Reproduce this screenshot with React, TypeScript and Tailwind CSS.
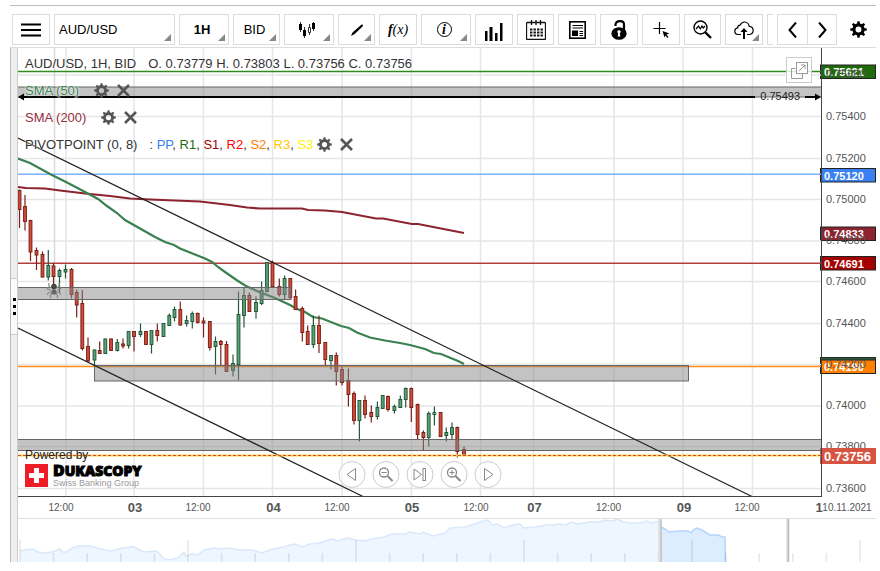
import type { ReactNode } from "react"

type Point = [number, number]
// x, high, low, body top, body bottom, rising
type Candle = [number, number, number, number, number, 0 | 1]

const candles: Candle[] = [
  [19.5, 189.5, 228, 190.5, 209.5, 0],
  [25, 195, 230.5, 206.5, 221.5, 0],
  [30.5, 219.7, 261, 220.5, 252, 0],
  [36.5, 247.5, 270, 250.5, 255, 0],
  [42.5, 251.5, 277.5, 254.5, 277, 0],
  [48.3, 250, 280.5, 265.5, 277, 1],
  [53.5, 263, 290, 266, 276.5, 0],
  [59.5, 268.5, 293, 270.5, 276.5, 1],
  [65.5, 264.5, 278.5, 269.5, 272, 1],
  [71.5, 268, 298.5, 269.5, 294.5, 0],
  [76.7, 289.5, 317.5, 292.5, 305, 0],
  [82.3, 290, 350.5, 303.5, 348.5, 0],
  [88, 337.5, 362, 346.5, 361, 0],
  [94.5, 349.5, 366, 350, 360, 1],
  [99.7, 341.5, 353.5, 350.5, 353.5, 0],
  [105.3, 338.5, 353.5, 339, 353.5, 1],
  [111, 338.5, 350.5, 339, 350.5, 0],
  [117.3, 339, 351.5, 342.5, 350.5, 1],
  [123, 338.5, 348.5, 344, 346, 0],
  [128.6, 331, 348.5, 331.5, 345.5, 1],
  [134, 331, 351.5, 331.5, 336.5, 0],
  [140.5, 323.5, 337, 331.5, 334.5, 1],
  [146, 331.5, 344.5, 331.5, 344.5, 0],
  [151.5, 330, 353.5, 330.5, 344.5, 1],
  [157.3, 323.5, 341.5, 330.5, 335.5, 0],
  [163.5, 323.5, 336.5, 323.5, 336.5, 1],
  [169.3, 313.5, 326, 315.5, 325.5, 1],
  [174.5, 306.5, 321.5, 309.5, 317.5, 1],
  [180.3, 301.5, 325.5, 309.5, 325, 0],
  [186.6, 315.5, 326.5, 320.5, 323.5, 1],
  [192.3, 311.5, 328.5, 313.5, 321.5, 1],
  [197.7, 312.5, 323.5, 313.5, 322.5, 0],
  [203.5, 317.5, 337.5, 321, 323, 0],
  [209.8, 321.5, 350.5, 321.5, 347.5, 0],
  [215.5, 336.5, 374.5, 341.5, 346.5, 1],
  [220.8, 340, 365, 341.5, 344.5, 0],
  [226.5, 341, 371.5, 344.5, 371.5, 0],
  [233, 354.5, 376.5, 363.5, 370.5, 1],
  [238.5, 291.5, 380, 314.5, 364.5, 1],
  [244, 287.5, 327.5, 295.5, 315.5, 1],
  [249.4, 292.5, 311.5, 295.5, 311.5, 0],
  [256, 296.5, 318.5, 302.5, 311.5, 1],
  [261.6, 281.5, 305, 290.5, 303.5, 1],
  [267, 262.5, 292.5, 262.5, 291.5, 1],
  [272.5, 260.5, 287, 262.5, 286.5, 0],
  [279.3, 278.5, 296.5, 286.5, 294.5, 0],
  [284.6, 275.5, 299.5, 278.5, 294.5, 1],
  [290.3, 278.5, 299.5, 278.5, 297.5, 0],
  [295.6, 289.5, 309.5, 296.5, 309.5, 0],
  [302.3, 306.5, 341.5, 308.5, 332.5, 0],
  [307.7, 325.5, 345, 331.5, 344.5, 0],
  [313.4, 315.5, 348, 325.5, 344.5, 1],
  [319, 315.5, 353, 325.5, 343.5, 0],
  [325.3, 342, 365.5, 342.5, 359.5, 0],
  [331, 355, 369.5, 355.5, 360.5, 1],
  [336.3, 352.5, 385.5, 355.5, 371.5, 0],
  [342, 366.5, 385.5, 369.5, 382.5, 0],
  [348.4, 368.5, 406.5, 380.5, 394.5, 0],
  [354, 391.5, 424.5, 393.5, 420.5, 0],
  [359.4, 400.5, 441.5, 400.5, 420.5, 1],
  [365, 395.5, 418.5, 400.5, 414.5, 0],
  [371.3, 405.5, 422.5, 412.5, 416.5, 0],
  [377.4, 401.5, 419.5, 407.5, 416.5, 1],
  [382.7, 395.5, 408.5, 395.5, 408.5, 1],
  [388, 395.5, 411.5, 396.5, 409.5, 0],
  [394.4, 404.5, 413.5, 406.5, 410.5, 1],
  [400.3, 395.5, 407.5, 399.5, 407.5, 1],
  [405.7, 387.5, 407.5, 388.5, 399.5, 1],
  [411.3, 387.5, 422, 388.5, 407.5, 0],
  [417.6, 403.5, 439.5, 404.5, 434.5, 0],
  [423.4, 430.5, 450.5, 432.5, 437.5, 0],
  [428.7, 411.5, 446.5, 413.5, 437.5, 1],
  [434.4, 406.5, 425.5, 412.5, 414.5, 1],
  [440.6, 412.5, 436.5, 412.5, 436.5, 0],
  [446.3, 427.5, 441.5, 432.5, 435.5, 1],
  [452, 422.5, 439.5, 427.5, 434.5, 1],
  [457.3, 426.5, 457.5, 427.5, 451.5, 0],
  [464, 446.5, 455.5, 449.5, 455.5, 0],
]

const sma50: Point[] = [
  [18, 158.5], [30, 163], [50, 174], [66, 182], [87, 193], [98, 199], [107, 206], [117, 213],
  [125, 220], [140, 228.5], [155, 237], [165, 242], [174, 245], [180, 248.5], [205, 258.5],
  [212, 262], [218, 267], [225, 272], [238, 281], [246, 286], [258, 291.5], [275, 298], [290, 305],
  [297, 309], [305, 312], [313, 317], [322, 318.5], [341, 326], [349, 328], [357, 332.5],
  [370, 337.5], [385, 340.5], [400, 343], [410, 345], [425, 349], [434, 353], [441, 354],
  [458, 361], [464, 364],
]

const sma200: Point[] = [
  [18, 187], [26, 188], [45, 188.5], [60, 190.5], [85, 193.5], [110, 196], [130, 198.5], [150, 199.5],
  [175, 200.5], [200, 201.5], [230, 205], [247, 207.5], [260, 208.5], [302, 208.5], [308, 210],
  [325, 210.5], [342, 212], [376, 218.5], [383, 218.5], [412, 224], [418, 224], [464, 233],
]

const history: Point[] = [
  [20, 551], [25, 550], [33, 549], [38, 552], [44, 553], [52, 552], [60, 549], [62, 552], [67, 552],
  [72, 548], [78, 546], [90, 546], [97, 548], [105, 550], [112, 551], [120, 548.5], [133, 546.5],
  [138, 549], [144, 552], [156, 551], [160, 554], [163, 558], [168, 560], [178, 558], [184, 552],
  [186, 556], [192, 554], [198, 555], [204, 550], [214, 548], [220, 549], [228, 548], [240, 550],
  [252, 550], [262, 553], [270, 550], [283, 547], [290, 545], [296, 544], [302, 547], [310, 544],
  [320, 543], [325, 541], [332, 539], [338, 541], [344, 539], [349, 538], [356, 540], [364, 541],
  [372, 539], [384, 537], [392, 534], [405, 534], [410, 532], [420, 534], [423, 532], [433, 536],
  [445, 533], [450, 528], [465, 527], [475, 524], [480, 522], [488, 520], [492, 525], [498, 524],
  [504, 528], [513, 525], [520, 524], [524, 528], [536, 527], [545, 525], [553, 525], [560, 524],
  [566, 525], [571, 522], [577, 524], [590, 522], [600, 522], [604, 520], [612, 521], [618, 519],
  [623, 522], [632, 523], [640, 523], [647, 521], [652, 523], [660, 521],
]

const selected: Point[] = [
  [661, 527], [665, 529], [669, 532], [680, 531], [688, 531], [691, 533], [693, 530], [697, 528],
  [702, 530], [710, 535], [718, 535], [722, 537], [725, 537],
]

const gridX: number[] = [66, 134, 203.5, 272.5, 342, 411.5, 480.5, 533.5, 614, 683, 752.5]
const gridY: number[] = [75, 116.5, 158.5, 199.5, 241, 281.5, 323.5, 364.5, 406, 446.5, 488.5]
const prices = ["0.75600", "0.75400", "0.75200", "0.75000", "0.74800", "0.74600", "0.74400", "0.74200", "0.74000", "0.73800", "0.73600"]

const times: [number, string, boolean][] = [
  [61, "12:00", false],
  [135, "03", true],
  [198, "12:00", false],
  [273.5, "04", true],
  [337, "12:00", false],
  [412, "05", true],
  [476, "12:00", false],
  [534.5, "07", true],
  [608.5, "12:00", false],
  [684, "09", true],
  [747, "12:00", false],
]

const tags = [
  { y: 65, color: "#1f6b0c", label: "0.75621" },
  { y: 168.5, color: "#3a80f0", label: "0.75120" },
  { y: 227, color: "#8c2430", label: "0.74833" },
  { y: 256.5, color: "#a50000", label: "0.74691" },
  { y: 357.5, color: "#2c5f3c", label: "" },
  { y: 360, color: "#ff8000", label: "0.74190" },
]

const toPath = (pts: Point[]) => pts.map((p) => p.join(",")).join(" ")

const teeth = [0, 45, 90, 135, 180, 225, 270, 315]

const Gear = ({ size, color }: { size: number; color: string }) => (
  <svg width={size} height={size} viewBox="0 0 16 16" fill={color}>
    <circle cx="8" cy="8" r="4.3" fill="none" stroke={color} strokeWidth="3" />
    {teeth.map((t) => (
      <path key={t} d="M6.5 3.2 L7 0.2 H9 L9.5 3.2 Z" transform={`rotate(${t} 8 8)`} />
    ))}
  </svg>
)

const Cross = () => (
  <svg width="13" height="13" viewBox="0 0 13 13" stroke="#555" strokeWidth="2.6">
    <path d="M1 1 L12 12 M12 1 L1 12" />
  </svg>
)

const Corner = () => (
  <span className="pointer-events-none absolute bottom-[3px] right-[3px] border-b-[7px] border-l-[7px] border-b-[#888] border-l-transparent" />
)

const Tool = ({ label, width, menu, children }: { label: string; width: string; menu?: boolean; children: ReactNode }) => (
  <button aria-label={label} className={`relative flex h-[31px] shrink-0 items-center justify-center border border-[#dcdcdc] bg-white ${width}`}>
    {children}
    {menu && <Corner />}
  </button>
)

const Pick = ({ label, width, text, value }: { label: string; width: string; text: string; value: string }) => (
  <div className={`relative h-[31px] shrink-0 border border-[#dcdcdc] bg-white ${width}`}>
    <select aria-label={label} className={`h-full w-full appearance-none bg-transparent text-[13px] text-black outline-none ${text}`}>
      <option>{value}</option>
    </select>
    <Corner />
  </div>
)

const Toolbar = () => (
  <div className="flex items-center gap-1 border-b border-t border-b-[#dcdcdc] border-t-[#bdbdbd] pb-[2px] pl-[2px] pt-2">
    <Tool label="Menu" width="w-[38px]">
      <svg width="20" height="14" stroke="#000" strokeWidth="2">
        <path d="M0 1.5 H20 M0 7 H20 M0 12.5 H20" />
      </svg>
    </Tool>
    <Pick label="Instrument" width="w-[121px]" text="pl-1" value="AUD/USD" />
    <Pick label="Period" width="w-[50px]" text="pr-1 text-center font-bold" value="1H" />
    <Pick label="Offer side" width="w-[47px]" text="pr-1 text-center" value="BID" />
    <Tool label="Chart type" width="w-[50px]" menu>
      <svg width="18" height="16" viewBox="0 0 18 16" className="mr-1">
        <path d="M2.5 0 V10 M6.5 5 V16 M11.5 2 V13 M15.5 0 V9" stroke="#333" />
        <path d="M1 2 h3 v6 h-3z M5 8 h3 v6 h-3z M14 1 h3 v6 h-3z" fill="#000" />
        <path d="M10.5 5.5 h2 v5 h-2z" fill="#fff" stroke="#333" />
      </svg>
    </Tool>
    <Tool label="Draw" width="w-[37px]" menu>
      <svg width="14" height="14" viewBox="0 0 14 14" className="mt-px">
        <path d="M1 13 L2.5 9.5 L10.5 2.5 Q12 1 12.8 1.8 Q13.4 2.6 12.3 3.8 L4.7 11 Z" fill="#000" />
      </svg>
    </Tool>
    <Tool label="Indicators" width="w-[38px]">
      <span className="font-['Liberation_Serif'] text-sm italic leading-none"><b>f</b>(x)</span>
    </Tool>
    <Tool label="Info" width="w-[50px]" menu>
      <span className="mr-1 flex size-[15px] items-center justify-center rounded-full border border-black font-['Liberation_Serif'] text-sm font-bold italic leading-none">i</span>
    </Tool>
    <Tool label="Volumes" width="w-[38px]">
      <svg width="18" height="18" fill="#000" className="mt-1">
        <path d="M0 8h2.5v10H0z M4.5 4h3v14h-3z M10 10h2.5v8h-2.5z M15 0h2.5v18h-2.5z" />
      </svg>
    </Tool>
    <Tool label="Calendar" width="w-[37px]">
      <svg width="20" height="20" viewBox="0 0 20 20" fill="none" stroke="#111">
        <rect x="0.5" y="2.5" width="19" height="17" rx="1" strokeWidth="1.3" />
        <path d="M5.5 0 V5 M10 0 V5 M14.5 0 V5" strokeWidth="1.3" />
        <path d="M4 9.5 H17 M4 12.5 H17 M4 15.5 H17" strokeWidth="2" strokeDasharray="2.4 1.1" />
      </svg>
    </Tool>
    <Tool label="News" width="w-[38px]">
      <svg width="17" height="18" viewBox="0 0 17 18" fill="none" stroke="#000">
        <rect x="0.8" y="0.8" width="15.4" height="16.4" strokeWidth="1.6" />
        <path d="M3.5 4.5 H14 M3.5 7 H14 M10.5 10.5 H14 M10.5 12.5 H14 M10.5 14.5 H14" strokeWidth="1.2" />
        <path d="M3 9.5 h6 v5.5 h-6z" fill="#000" stroke="none" />
      </svg>
    </Tool>
    <Tool label="Unlock" width="w-[38px]">
      <svg width="17" height="20" viewBox="0 0 17 20">
        <path d="M4.5 6 V4.5 Q5 1.2 9 1.2 Q13 1.2 13 4.5 V10" fill="none" stroke="#000" strokeWidth="2.2" />
        <ellipse cx="8" cy="13.5" rx="7.6" ry="6.3" fill="#000" />
        <path d="M8 10.2 a1.6 1.6 0 0 1 0.9 3 L9.3 16.5 H6.7 L7.1 13.2 A1.6 1.6 0 0 1 8 10.2z" fill="#fff" />
      </svg>
    </Tool>
    <Tool label="Crosshair" width="w-[38px]">
      <svg width="17" height="16" viewBox="0 0 17 16">
        <path d="M6.5 0 V12 M0.5 6.5 H12.5" stroke="#000" strokeWidth="1.2" />
        <path d="M9.5 9 L16.5 11.5 L13.5 12.5 L15.5 15 L14.5 16 L12.5 13.5 L11.5 15.5 Z" fill="#000" />
      </svg>
    </Tool>
    <Tool label="Zoom to pattern" width="w-[37px]">
      <svg width="19" height="19" viewBox="0 0 19 19" fill="none" stroke="#000">
        <circle cx="7.5" cy="7.5" r="6.5" strokeWidth="1.4" />
        <path d="M3 9 L5.5 6 L7.3 8.8 L9 6 L10.2 8 L12 6" strokeWidth="1.2" />
        <path d="M12.3 12.3 L18 18" strokeWidth="2.4" />
      </svg>
    </Tool>
    <Tool label="Save" width="w-[38px]" menu>
      <svg width="20" height="18" viewBox="0 0 20 18" fill="none" stroke="#000" className="mt-px">
        <path d="M7 13.5 H4 Q0.8 13.2 0.8 10 Q0.9 7.3 3.7 6.8 Q3.8 4.3 6 4.2 Q7.5 0.9 10.8 1 Q14.6 1.3 15.2 5.4 Q19 5.8 19.2 9.3 Q19 13.2 15.5 13.5 H13" strokeWidth="1.2" />
        <path d="M10 18 V9" strokeWidth="2" />
        <path d="M6.5 11 L10 7 L13.5 11 Z" fill="#000" stroke="none" />
      </svg>
    </Tool>
    <div className="h-[31px] w-[6px] border-y border-l border-[#dcdcdc]" />
    <div className="ml-auto flex h-[31px] border border-[#dcdcdc]">
      <button aria-label="Previous tools" className="flex w-[30px] items-center justify-center border-r border-[#dcdcdc]">
        <svg width="9" height="16" fill="none" stroke="#000" strokeWidth="2"><path d="M8 0.5 L1.5 8 L8 15.5" /></svg>
      </button>
      <button aria-label="Next tools" className="flex w-[28px] items-center justify-center">
        <svg width="9" height="16" fill="none" stroke="#000" strokeWidth="2"><path d="M1 0.5 L7.5 8 L1 15.5" /></svg>
      </button>
    </div>
    <button aria-label="Settings" className="flex w-[35px] justify-center">
      <Gear size={17} color="#000" />
    </button>
  </div>
)

const LegendActions = ({ name }: { name: string }) => (
  <>
    <button aria-label={`${name} settings`}><Gear size={15} color="#555" /></button>
    <button aria-label={`Remove ${name}`} className="ml-2"><Cross /></button>
  </>
)

const Legend = () => (
  <div className="absolute left-[7px] top-[2px] text-[13px] text-[#333] [text-shadow:0_0_2px_#fff,0_0_2px_#fff]">
    <div className="flex h-[27px] items-center gap-3">
      <span>AUD/USD, 1H, BID</span>
      <span>O. 0.73779 H. 0.73803 L. 0.73756 C. 0.73756</span>
    </div>
    <div className="flex h-[27px] items-center">
      <span className="mr-[15px] text-[#3a8050]">SMA (50)</span>
      <LegendActions name="SMA 50" />
    </div>
    <div className="flex h-[27px] items-center">
      <span className="mr-[15px] text-[#962d3c]">SMA (200)</span>
      <LegendActions name="SMA 200" />
    </div>
    <div className="flex h-[27px] items-center">
      <span className="mr-3">PIVOTPOINT (0, 8)</span>
      <span className="mr-1">
        : <span className="text-[#3a80f0]">PP</span>, <span className="text-[#1f6b0c]">R1</span>, <span className="text-[#a50000]">S1</span>, <span className="text-[#f00]">R2</span>, <span className="text-[#ff8000]">S2</span>, <span className="text-[#ffc800]">R3</span>, <span className="text-[#fff000]">S3</span>
      </span>
      <LegendActions name="Pivot point" />
    </div>
  </div>
)

const Plot = () => (
  <svg className="block h-full w-full">
    <g transform="translate(-18 -48)">
      <g stroke="#e6e6e9" strokeWidth="1.5">
        {gridX.map((x) => <line key={x} x1={x} x2={x} y1="48" y2="496" />)}
        {gridY.map((y) => <line key={y} x1="18" x2="200%" y1={y} y2={y} />)}
        <line x1="54.5" x2="54.5" y1="48" y2="290" stroke="#d9d9d9" />
      </g>

      <line x1="18" x2="200%" y1="71.5" y2="71.5" stroke="#2f8a1c" strokeWidth="1.4" />
      <line x1="18" x2="200%" y1="174.3" y2="174.3" stroke="#7fb0fa" strokeWidth="1.6" />
      <line x1="18" x2="200%" y1="263.3" y2="263.3" stroke="#b33c3c" strokeWidth="1.4" />
      <line x1="18" x2="200%" y1="366.5" y2="366.5" stroke="#ff8a14" strokeWidth="1.4" />

      <polyline points={toPath(sma200)} fill="none" stroke="#8c2430" strokeWidth="2.2" />
      <polyline points={toPath(sma50)} fill="none" stroke="#3a8050" strokeWidth="2.2" />

      {candles.map(([x, high, low, top, bottom, up]) => (
        <g key={x} stroke={up ? "#25563a" : "#7a2018"}>
          <line x1={x} x2={x} y1={high} y2={low} strokeWidth="1.2" />
          <rect x={x - 1.4} y={top} width="2.8" height={bottom - top} fill={up ? "#5aa578" : "#d64a38"} />
        </g>
      ))}

      <g fill="#888" fillOpacity="0.5" stroke="#666">
        <rect x="10" y="87" width="200%" height="10" />
        <rect x="10" y="287.5" width="281" height="12" />
        <rect x="94.5" y="365.5" width="594" height="15.5" />
        <rect x="10" y="439.5" width="200%" height="11" />
      </g>

      <path d="M18 138 L752 496.5 M18 328 L363 496.5" stroke="#222" strokeWidth="1.2" />

      <path d="M51.5 288 Q48 287 49 283 M56.5 288 Q60 287 59 283 M51 290 Q47 290 47 287 M57 290 Q61 290 61 287 M51.5 292 Q47.5 292 47.5 295 M56.5 292 Q60.5 292 60.5 295 M52 293.5 Q49.5 295 51 298 M56 293.5 Q58.5 295 57 298" fill="none" stroke="#888" strokeWidth="1.2" />
      <circle cx="54" cy="286.5" r="2.8" fill="#444" />
      <circle cx="54" cy="292" r="2.6" fill="#666" />

      <line x1="18" x2="200%" y1="455.5" y2="455.5" stroke="#ffd24a" strokeWidth="2" />
      <line x1="18" x2="200%" y1="455.5" y2="455.5" stroke="#cc4a38" strokeDasharray="3 2" />
    </g>
  </svg>
)

// The marker line stays attached to both sides of the plot
const PriceMarker = () => (
  <div className="absolute inset-x-0 top-[41px] flex h-4 items-center">
    <svg width="8" height="8" className="-mr-1 shrink-0"><path d="M0 4 L6 0.5 V7.5 Z" /></svg>
    <div className="h-[2px] flex-1 bg-black" />
    <span className="px-[5px] pb-[3px] text-[11px] leading-3 text-[#222]">0.75493</span>
    <div className="h-[2px] w-3 bg-black" />
    <svg width="8" height="8" className="-ml-1 shrink-0"><path d="M8 4 L2 0.5 V7.5 Z" /></svg>
  </div>
)

const Branding = () => (
  <div className="absolute bottom-[8px] left-[7px]">
    <div className="text-xs leading-3 text-[#222]">Powered by</div>
    <a href="#" className="mt-[2px] flex items-center gap-[5px]">
      <svg width="23" height="23">
        <rect width="23" height="23" fill="#ee1c25" />
        <path d="M9 4 h5 v5 h5 v5 h-5 v5 h-5 v-5 h-5 v-5 h5z" fill="#fff" />
      </svg>
      <span className="flex flex-col">
        <span className="font-['Open_Sans'] text-sm font-extrabold leading-[14px] text-black [-webkit-text-stroke:1px_#000]"><span className="text-base leading-[14px]">D</span>UKASCOPY</span>
        <span className="text-[9px] leading-[10px] text-[#999]">Swiss Banking Group</span>
      </span>
    </a>
  </div>
)

const Round = ({ label, children }: { label: string; children: ReactNode }) => (
  <button aria-label={label} className="flex size-[27px] items-center justify-center rounded-full border border-[#ccc] bg-white/60">
    <svg width="15" height="15" viewBox="0 0 15 15" fill="none" stroke="#888">{children}</svg>
  </button>
)

const Navigation = () => (
  <div className="absolute bottom-[8px] left-1/2 flex -translate-x-1/2 gap-[7px]">
    <Round label="Scroll left"><path d="M11 1.5 V13.5 L2.5 7.5 Z" /></Round>
    <Round label="Zoom out">
      <circle cx="5.5" cy="5.5" r="4.5" strokeWidth="1.3" />
      <path d="M3 5.5 H8" />
      <path d="M9 9 L14 14" strokeWidth="2" />
    </Round>
    <Round label="Go to last">
      <path d="M1.5 2 V13 L9 7.5 Z" />
      <rect x="10.5" y="1.5" width="2.5" height="12" />
    </Round>
    <Round label="Zoom in">
      <circle cx="5.5" cy="5.5" r="4.5" strokeWidth="1.3" />
      <path d="M3 5.5 H8 M5.5 3 V8" />
      <path d="M9 9 L14 14" strokeWidth="2" />
    </Round>
    <Round label="Scroll right"><path d="M4 1.5 V13.5 L12.5 7.5 Z" /></Round>
  </div>
)

const PriceAxis = () => (
  <svg className="block h-[448px] w-[54px] shrink-0 overflow-visible">
    <g transform="translate(-822 -48)" fontSize="11" fill="#555">
      {tags.map((t) => (
        <g key={t.y}>
          <rect x="820.5" y={t.y} width="55" height="13.5" fill={t.color} stroke="#222" />
          <text x="824" y={t.y + 11} fill="#fff" fontWeight="700">{t.label}</text>
        </g>
      ))}
      {prices.map((p, i) => <text key={p} x="826" y={gridY[i] + 3}>{p}</text>)}
      <rect x="820" y="448" width="56" height="16" fill="#d85442" />
      <text x="824" y="460.5" fill="#fff" fontWeight="700" fontSize="13">0.73756</text>
    </g>
  </svg>
)

const TimeAxis = () => (
  <svg className="block h-[21px] w-full">
    <g transform="translate(-18 -497)" fill="#555" textAnchor="middle">
      {times.map(([x, label, day]) => (
        <text key={x} x={x} y={day ? 512 : 511} fontSize={day ? 13 : 10} fontWeight={day ? 700 : 400}>{label}</text>
      ))}
      <text x="819" y="512" fontSize="13" fontWeight="700">1</text>
      <text x="847" y="511" fontSize="10">10.11.2021</text>
    </g>
  </svg>
)

const months = Array.from({ length: 26 }, (_, i) => 20 + i * 33.6)

const Navigator = () => (
  <svg className="block h-[44px] w-full border-t border-[#e0e0e0]">
    <g transform="translate(-18 -519)">
      <path d={`M20,563 L${toPath(history)} V563 Z`} fill="#eef6ff" />
      <polyline points={toPath(history)} fill="none" stroke="#dbe8fa" strokeWidth="1.5" />
      <path d={`M661,563 L${toPath(selected)} V563 Z`} fill="#dcedff" />
      <polyline points={`${toPath(selected)} 725.5,563`} fill="none" stroke="#b5d4fb" strokeWidth="1.5" />
      {months.map((x, i) => (
        <line key={x} x1={x} x2={x} y1={i % 5 ? 553 : 540} y2="563" stroke="#000" strokeOpacity="0.09" strokeWidth="1.6" />
      ))}
      <path d="M659 519 V563 M787 519 V563" stroke="#e2e2e2" strokeWidth="2" />
      <path d="M661 519 V563 M788.5 519 V563" stroke="#b8b8b8" strokeWidth="1.4" />
    </g>
  </svg>
)

const App = () => {
  return (
    <div className="min-h-screen bg-white pl-[10px] pr-1 pt-[5px] font-['Liberation_Sans',Arial,sans-serif]">
      <Toolbar />
      <div className="flex">
        <div className="flex w-2 shrink-0 flex-col border-l border-r border-l-[#bbb] border-r-[#ccc] bg-[#eee]">
          <button aria-label="Toggle side panel" className="mt-[230px] flex h-[57px] flex-col items-center justify-center gap-1 border-y border-[#ccc] bg-[#fafafa]">
            <span className="size-[3px] bg-black" />
            <span className="size-[3px] bg-black" />
            <span className="size-[3px] bg-black" />
          </button>
        </div>
        <div className="min-w-0 flex-1">
          <div className="flex">
            <div className="relative h-[449px] min-w-0 flex-1 border-b border-r border-[#444]">
              <Plot />
              <PriceMarker />
              <Legend />
              <button aria-label="Detach chart" className="absolute right-[9px] top-[9px] flex size-[26px] items-center justify-center border border-[#ccc] bg-white/80">
                <svg width="17" height="17" viewBox="0 0 17 17" fill="none" stroke="#999">
                  <path d="M4.5 6.5 H0.5 V16.5 H11.5 V11.5" />
                  <rect x="5.5" y="0.5" width="11" height="11" fill="#fff" />
                  <path d="M8 9 L14 3 M10 3 H14 V7" />
                </svg>
              </button>
              <Branding />
              <Navigation />
            </div>
            <PriceAxis />
          </div>
          <TimeAxis />
          <Navigator />
        </div>
      </div>
    </div>
  )
}

export default App
